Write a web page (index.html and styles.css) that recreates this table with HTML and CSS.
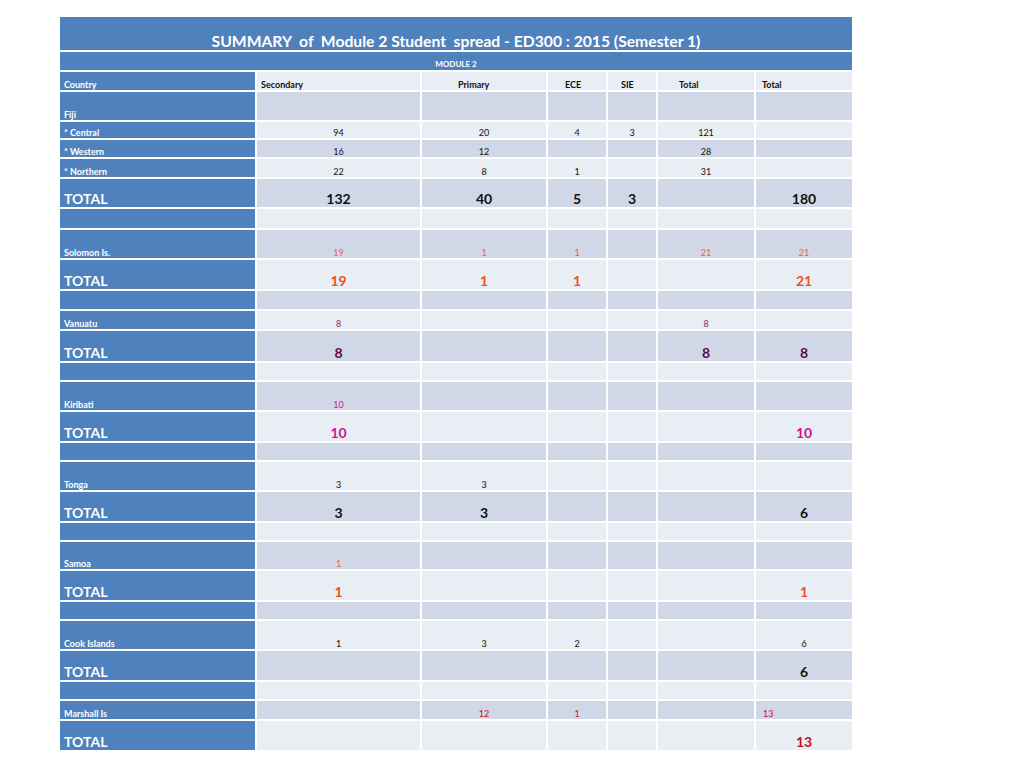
FILE: index.html
```html
<!DOCTYPE html>
<html>
<head>
<meta charset="utf-8">
<link rel="stylesheet" href="styles.css">
</head>
<body>
<div class="sheet">
  <div class="banner title"><span>SUMMARY&nbsp; of&nbsp; Module 2 Student&nbsp; spread - ED300 : 2015 (Semester 1)</span></div>
  <div class="banner module"><span>MODULE 2</span></div>

  <div class="row light r-short head">
    <div class="lab">Country</div>
    <div class="c h-sec">Secondary</div>
    <div class="c h-pri">Primary</div>
    <div class="c h-ece">ECE</div>
    <div class="c h-sie">SIE</div>
    <div class="c h-tot">Total</div>
    <div class="c h-tot2">Total</div>
  </div>

  <div class="row dark r-tall">
    <div class="lab">Fiji</div>
    <div class="c"></div><div class="c"></div><div class="c"></div><div class="c"></div><div class="c"></div><div class="c"></div>
  </div>
  <div class="row light r-sub">
    <div class="lab">* Central</div>
    <div class="c n">94</div><div class="c n">20</div><div class="c n">4</div><div class="c n">3</div><div class="c n">121</div><div class="c"></div>
  </div>
  <div class="row dark r-sub2">
    <div class="lab">* Western</div>
    <div class="c n">16</div><div class="c n">12</div><div class="c"></div><div class="c"></div><div class="c n">28</div><div class="c"></div>
  </div>
  <div class="row light r-short">
    <div class="lab">* Northern</div>
    <div class="c n">22</div><div class="c n">8</div><div class="c n">1</div><div class="c"></div><div class="c n">31</div><div class="c"></div>
  </div>
  <div class="row dark r-total r-total-s">
    <div class="lab big-lab">TOTAL</div>
    <div class="c b">132</div><div class="c b">40</div><div class="c b">5</div><div class="c b">3</div><div class="c"></div><div class="c b">180</div>
  </div>
  <div class="row light r-gap r-gap-l">
    <div class="lab"></div>
    <div class="c"></div><div class="c"></div><div class="c"></div><div class="c"></div><div class="c"></div><div class="c"></div>
  </div>

  <div class="row dark r-tall orange">
    <div class="lab">Solomon Is.</div>
    <div class="c n">19</div><div class="c n">1</div><div class="c n">1</div><div class="c"></div><div class="c n">21</div><div class="c n">21</div>
  </div>
  <div class="row light r-total orange">
    <div class="lab big-lab">TOTAL</div>
    <div class="c b">19</div><div class="c b">1</div><div class="c b">1</div><div class="c"></div><div class="c"></div><div class="c b">21</div>
  </div>
  <div class="row dark r-gap r-gap-m">
    <div class="lab"></div>
    <div class="c"></div><div class="c"></div><div class="c"></div><div class="c"></div><div class="c"></div><div class="c"></div>
  </div>

  <div class="row light r-short plum">
    <div class="lab">Vanuatu</div>
    <div class="c n">8</div><div class="c"></div><div class="c"></div><div class="c"></div><div class="c n">8</div><div class="c"></div>
  </div>
  <div class="row dark r-total r-total-l maroon">
    <div class="lab big-lab">TOTAL</div>
    <div class="c b">8</div><div class="c"></div><div class="c"></div><div class="c"></div><div class="c b">8</div><div class="c b">8</div>
  </div>
  <div class="row light r-gap">
    <div class="lab"></div>
    <div class="c"></div><div class="c"></div><div class="c"></div><div class="c"></div><div class="c"></div><div class="c"></div>
  </div>

  <div class="row dark r-tall magenta">
    <div class="lab">Kiribati</div>
    <div class="c n">10</div><div class="c"></div><div class="c"></div><div class="c"></div><div class="c"></div><div class="c"></div>
  </div>
  <div class="row light r-total magenta">
    <div class="lab big-lab">TOTAL</div>
    <div class="c b">10</div><div class="c"></div><div class="c"></div><div class="c"></div><div class="c"></div><div class="c b">10</div>
  </div>
  <div class="row dark r-gap">
    <div class="lab"></div>
    <div class="c"></div><div class="c"></div><div class="c"></div><div class="c"></div><div class="c"></div><div class="c"></div>
  </div>

  <div class="row light r-tall">
    <div class="lab">Tonga</div>
    <div class="c n">3</div><div class="c n">3</div><div class="c"></div><div class="c"></div><div class="c"></div><div class="c"></div>
  </div>
  <div class="row dark r-total">
    <div class="lab big-lab">TOTAL</div>
    <div class="c b">3</div><div class="c b">3</div><div class="c"></div><div class="c"></div><div class="c"></div><div class="c b">6</div>
  </div>
  <div class="row light r-gap">
    <div class="lab"></div>
    <div class="c"></div><div class="c"></div><div class="c"></div><div class="c"></div><div class="c"></div><div class="c"></div>
  </div>

  <div class="row dark r-tall r-tall-s orange">
    <div class="lab">Samoa</div>
    <div class="c n">1</div><div class="c"></div><div class="c"></div><div class="c"></div><div class="c"></div><div class="c"></div>
  </div>
  <div class="row light r-total orange">
    <div class="lab big-lab">TOTAL</div>
    <div class="c b">1</div><div class="c"></div><div class="c"></div><div class="c"></div><div class="c"></div><div class="c b">1</div>
  </div>
  <div class="row dark r-gap">
    <div class="lab"></div>
    <div class="c"></div><div class="c"></div><div class="c"></div><div class="c"></div><div class="c"></div><div class="c"></div>
  </div>

  <div class="row light r-tall">
    <div class="lab">Cook Islands</div>
    <div class="c n">1</div><div class="c n">3</div><div class="c n">2</div><div class="c"></div><div class="c"></div><div class="c n">6</div>
  </div>
  <div class="row dark r-total">
    <div class="lab big-lab">TOTAL</div>
    <div class="c"></div><div class="c"></div><div class="c"></div><div class="c"></div><div class="c"></div><div class="c b">6</div>
  </div>
  <div class="row light r-gap">
    <div class="lab"></div>
    <div class="c"></div><div class="c"></div><div class="c"></div><div class="c"></div><div class="c"></div><div class="c"></div>
  </div>

  <div class="row dark r-short red">
    <div class="lab">Marshall Is</div>
    <div class="c"></div><div class="c n">12</div><div class="c n">1</div><div class="c"></div><div class="c"></div><div class="c n left">13</div>
  </div>
  <div class="row light r-total red">
    <div class="lab big-lab">TOTAL</div>
    <div class="c"></div><div class="c"></div><div class="c"></div><div class="c"></div><div class="c"></div><div class="c b">13</div>
  </div>
</div>
</body>
</html>
```

FILE: styles.css
```css
html, body {
  margin: 0;
  padding: 0;
  background: #ffffff;
}

body {
  font-family: Lato, "Liberation Sans", sans-serif;
  color: #111111;
}

.sheet {
  width: 792px;
  margin: 17px 0 0 60px;
  display: flex;
  flex-direction: column;
  gap: 2px;
  background: #ffffff;
}

.banner {
  background: #4f81bd;
  color: #ffffff;
  display: flex;
  justify-content: center;
  align-items: flex-end;
  font-weight: 700;
}

.title {
  height: 33px;
  font-size: 15.7px;
  line-height: 18px;
  padding-bottom: 0;
  box-sizing: border-box;
}

.module {
  height: 18px;
  font-size: 8px;
  line-height: 10px;
  padding-bottom: 1px;
  box-sizing: border-box;
}

.row {
  display: grid;
  grid-template-columns: 195px 163px 124px 58px 48px 96px 96px;
  column-gap: 2px;
}

.r-short { height: 18px; }
.r-sub { height: 16px; }
.r-sub2 { height: 17px; }
.r-tall { height: 28px; }
.r-tall-s { height: 27px; }
.r-total { height: 29px; }
.r-total-s { height: 28px; }
.r-total-l { height: 30px; }
.r-gap { height: 17px; }
.r-gap-m { height: 18px; }
.r-gap-l { height: 19px; }

.lab,
.c {
  display: flex;
  align-items: flex-end;
  box-sizing: border-box;
  font-size: 9px;
  line-height: 11px;
  padding-bottom: 0;
  white-space: nowrap;
}

.lab {
  background: #4f81bd;
  color: #ffffff;
  font-weight: 700;
  padding-left: 4px;
}

.big-lab {
  font-size: 14px;
  line-height: 17px;
  padding-bottom: 0;
}

.light .c { background: #e9edf4; }
.dark .c { background: #d0d8e8; }

.c.n,
.c.b {
  justify-content: center;
}

.c.b {
  font-size: 14px;
  line-height: 17px;
  font-weight: 700;
  padding-bottom: 0;
}

.c.left {
  justify-content: flex-start;
  padding-left: 7px;
}

.head .c {
  font-weight: 700;
  color: #111111;
}

.h-sec { padding-left: 4px; }
.h-pri { padding-left: 36px; }
.h-ece { padding-left: 17px; }
.h-sie { padding-left: 13px; }
.h-tot { padding-left: 21px; }
.h-tot2 { padding-left: 6px; }

.orange .c { color: #ee4f1f; }
.orange .c.n { color: #e8604a; }
.plum .c { color: #7a2f66; }
.maroon .c { color: #5c0a45; }
.magenta .c { color: #cc1499; }
.red .c { color: #c8101a; }
```
